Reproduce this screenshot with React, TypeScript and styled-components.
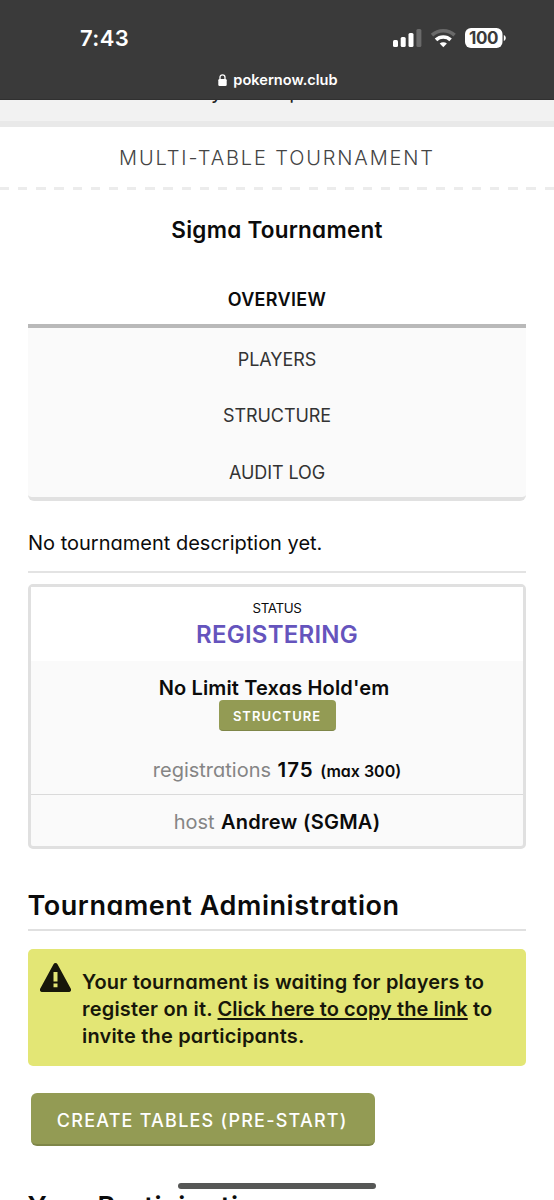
import React from 'react';
import styled, { createGlobalStyle } from 'styled-components';

const Global = createGlobalStyle`
  * { box-sizing: border-box; }
  body {
    margin: 0;
    background: #fff;
    color: #0b0b0b;
    font-family: Inter, "Liberation Sans", sans-serif;
  }
  #root { height: 1200px; overflow: hidden; }
`;

const Screen = styled.div`
  position: relative;
  display: flex;
  flex-direction: column;
  width: 554px;
  height: 1200px;
  overflow: hidden;
`;

const BrowserChrome = styled.header`
  flex: none;
  height: 100px;
  background: #3a3a3a;
  border-bottom: 1px solid #303030;
  color: #fff;
`;

const StatusBar = styled.div`
  display: flex;
  align-items: center;
  justify-content: space-between;
  height: 74px;
  padding: 2px 48px 0 80px;
`;

const Clock = styled.span`
  font-size: 22px;
  font-weight: 600;
  letter-spacing: 0.4px;
`;

const StatusIcons = styled.svg`
  display: block;
  width: 114px;
  height: 22px;
`;

const BatteryText = styled.text`
  font: 700 17px Inter, sans-serif;
  letter-spacing: -0.5px;
  fill: #3a3a3a;
`;

const AddressBar = styled.div`
  display: flex;
  align-items: center;
  justify-content: center;
  gap: 6px;
  height: 12px;
  padding-left: 2px;
  font-size: 14.6px;
  font-weight: 600;
  line-height: 12px;
`;

const Peek = styled.div`
  flex: none;
  display: flex;
  gap: 67px;
  height: 27px;
  padding-left: 211px;
  overflow: hidden;
  background: #f2f2f2;
  border-bottom: 6px solid #e9e9e9;
  font-size: 20px;
  line-height: 24px;
  color: #222;
  & > span { margin-top: -20px; }
`;

const Banner = styled.div`
  flex: none;
  height: 60px;
  line-height: 63px;
  text-align: center;
  font-size: 20px;
  font-weight: 300;
  letter-spacing: 1.85px;
  color: #444;
`;

const Dashes = styled.div`
  flex: none;
  height: 3px;
  background: repeating-linear-gradient(90deg, #ececec 0 9.3px, #fff 9.3px 18.15px);
`;

const Main = styled.main`
  flex: none;
  padding: 0 28px;
  font-feature-settings: "cv11";
`;

const Title = styled.h1`
  margin: 0;
  height: 78px;
  line-height: 79px;
  text-align: center;
  font-size: 22.5px;
  font-weight: 600;
  letter-spacing: 0.25px;
`;

const Tabs = styled.nav`
  border-bottom: 4px solid #e1e1e1;
  border-radius: 0 0 6px 6px;
  background: #fafafa;
`;

const Tab = styled.div<{ $active?: boolean }>`
  display: flex;
  align-items: center;
  justify-content: center;
  height: ${p => (p.$active ? 60 : 56.33)}px;
  padding-top: 6.5px;
  border-bottom: ${p => (p.$active ? '4px solid #b9b9b9' : '0')};
  background: ${p => (p.$active ? '#fff' : 'transparent')};
  color: ${p => (p.$active ? '#0b0b0b' : '#333')};
  font-size: 18px;
  font-weight: ${p => (p.$active ? 600 : 400)};
  letter-spacing: ${p => (p.$active ? 0.35 : -0.08)}px;
`;

const Description = styled.p`
  margin: 0;
  height: 72px;
  border-bottom: 2px solid #e3e3e3;
  line-height: 84px;
  font-size: 20px;
`;

const Card = styled.section`
  margin-top: 11px;
  height: 265px;
  border: 3px solid #e0e0e0;
  border-radius: 5px;
  background: #fafafa;
  text-align: center;
`;

const CardHeader = styled.div`
  height: 74px;
  padding-top: 11px;
  background: #fff;
`;

const StatusLabel = styled.div`
  font-size: 13.3px;
  line-height: 20px;
  letter-spacing: -0.35px;
`;

const StatusValue = styled.div`
  color: #6554bd;
  font-size: 24px;
  font-weight: 600;
  line-height: 33px;
  letter-spacing: 0.25px;
`;

const GameInfo = styled.div`
  display: flex;
  flex-direction: column;
  align-items: center;
  height: 134px;
  padding-top: 14px;
  border-bottom: 1px solid #dadada;
`;

const GameName = styled.div`
  height: 25px;
  padding-right: 6px;
  font-size: 20px;
  font-weight: 600;
  line-height: 26px;
  letter-spacing: 0.14px;
`;

const Stat = styled.div`
  display: flex;
  align-items: baseline;
  justify-content: center;
  gap: 6.5px;
  font-size: 20px;
  line-height: 25px;
`;

const StatLabel = styled.span`
  color: #858585;
`;

const StatValue = styled.strong<{ $size?: number; $track?: number }>`
  font-weight: 600;
  font-size: ${p => p.$size ?? 20}px;
  letter-spacing: ${p => p.$track ?? 0}px;
`;

const HostRow = styled.div`
  padding-top: 15px;
`;

const Button = styled.button<{ $small?: boolean }>`
  display: flex;
  align-items: center;
  justify-content: center;
  width: ${p => (p.$small ? 117 : 344.5)}px;
  height: ${p => (p.$small ? 31 : 52.5)}px;
  margin: ${p => (p.$small ? '0 0 26px' : '27px 0 0 2.5px')};
  padding: ${p => (p.$small ? '2px 0 0' : '4px 1px 0 0')};
  border: 0;
  border-bottom: ${p => (p.$small ? '1px' : '2px')} solid #7e8648;
  border-radius: ${p => (p.$small ? 4 : 6)}px;
  background: #939b54;
  color: #fff;
  font-family: inherit;
  font-size: ${p => (p.$small ? 13 : 18)}px;
  font-weight: ${p => (p.$small ? 600 : 500)};
  letter-spacing: ${p => (p.$small ? 1 : 1.22)}px;
`;

const Heading = styled.h2<{ $cut?: boolean }>`
  margin: 0;
  height: ${p => (p.$cut ? 54 : 82)}px;
  overflow: hidden;
  border-bottom: ${p => (p.$cut ? '0' : '2px solid #e0e0e0')};
  line-height: ${p => (p.$cut ? 121 : 114)}px;
  font-size: 27px;
  font-weight: 600;
  letter-spacing: 0.56px;
  text-indent: -0.5px;
`;

const Alert = styled.div`
  display: flex;
  gap: 11px;
  height: 117.5px;
  margin-top: 18px;
  padding: 14.5px 12px 0;
  border-radius: 5px;
  background: #e3e675;
  color: #17170a;
  & > svg { flex: none; }
`;

const AlertText = styled.p`
  margin: 6px 0 0;
  font-size: 20px;
  font-weight: 600;
  line-height: 27px;
  letter-spacing: 0.19px;
  white-space: nowrap;
`;

const CopyLink = styled.a`
  letter-spacing: 0.05px;
  text-decoration: underline;
  text-decoration-thickness: 1.5px;
  text-underline-offset: 2px;
`;

const HomeIndicator = styled.div`
  position: absolute;
  left: 178px;
  top: 1183px;
  width: 198px;
  height: 6px;
  border-radius: 3px;
  background: #565756;
`;

const tabs = ['OVERVIEW', 'PLAYERS', 'STRUCTURE', 'AUDIT LOG'];

export default function App() {
  return (
    <Screen>
      <Global />
      <BrowserChrome>
        <StatusBar>
          <Clock>7:43</Clock>
          <StatusIcons viewBox="0 0 114 22">
            <rect x="1" y="13" width="5" height="7" rx="1.5" fill="#fff" />
            <rect x="8.7" y="10" width="5" height="10" rx="1.5" fill="#fff" />
            <rect x="16.5" y="6" width="5" height="14" rx="1.5" fill="#fff" />
            <rect x="24.4" y="2" width="5" height="18" rx="1.5" fill="#6a6a6a" />
            <g fill="none" strokeWidth="3.6">
              <path d="M40 8.1a17 17 0 0 1 22.6 0" stroke="#6a6a6a" />
              <path d="M44 12.9a10.6 10.6 0 0 1 14.6 0" stroke="#fff" />
            </g>
            <path d="M51.3 20.2l-3.6-3.600a5.200 5.200 0 0 1 7.200 0z" fill="#fff" />
            <rect x="73" y="1" width="37.5" height="20" rx="6" fill="#fff" />
            <path d="M111.8 8v6c2.6-.8 2.6-5.2 0-6z" fill="#fff" />
            <BatteryText x="91.5" y="17.2" textAnchor="middle">100</BatteryText>
          </StatusIcons>
        </StatusBar>
        <AddressBar>
          <svg width="9" height="12" viewBox="0 0 9 12">
            <rect x="0.3" y="5" width="8.4" height="7" rx="1.3" fill="#fff" />
            <path d="M2 5.5V3.3a2.5 2.5 0 0 1 5 0v2.2" fill="none" stroke="#fff" strokeWidth="1.3" />
          </svg>
          <span>pokernow.club</span>
        </AddressBar>
      </BrowserChrome>
      <Peek>
        <span>y</span>
        <span>p</span>
      </Peek>
      <Banner>MULTI-TABLE TOURNAMENT</Banner>
      <Dashes />
      <Main>
        <Title>Sigma Tournament</Title>
        <Tabs>
          {tabs.map((t, i) => (
            <Tab key={t} $active={i === 0}>{t}</Tab>
          ))}
        </Tabs>
        <Description>No tournament description yet.</Description>
        <Card>
          <CardHeader>
            <StatusLabel>STATUS</StatusLabel>
            <StatusValue>REGISTERING</StatusValue>
          </CardHeader>
          <GameInfo>
            <GameName>No Limit Texas Hold'em</GameName>
            <Button $small>STRUCTURE</Button>
            <Stat>
              <StatLabel>registrations</StatLabel>
              <StatValue $size={20.5} $track={1}>175</StatValue>
              <StatValue $size={16}>(max 300)</StatValue>
            </Stat>
          </GameInfo>
          <HostRow>
            <Stat>
              <StatLabel>host</StatLabel>
              <StatValue $track={0.25}>Andrew (SGMA)</StatValue>
            </Stat>
          </HostRow>
        </Card>
        <Heading>Tournament Administration</Heading>
        <Alert>
          <svg width="31" height="29" viewBox="0 0 31 29">
            <path
              d="M13.5 1.2a2.3 2.3 0 0 1 4 0l13.2 24.4a2.2 2.2 0 0 1-2 3.400H2.300a2.200 2.200 0 0 1-2-3.400zM13.500 9v9.500h4V9zM13.500 20.500v3.800h4v-3.800z"
              fill="#17170a"
              fillRule="evenodd"
            />
          </svg>
          <AlertText>
            Your tournament is waiting for players to
            <br />
            register on it. <CopyLink>Click here to copy the link</CopyLink> to
            <br />
            invite the participants.
          </AlertText>
        </Alert>
        <Button>CREATE TABLES (PRE-START)</Button>
        <Heading $cut>Your Participation</Heading>
      </Main>
      <HomeIndicator />
    </Screen>
  );
}
